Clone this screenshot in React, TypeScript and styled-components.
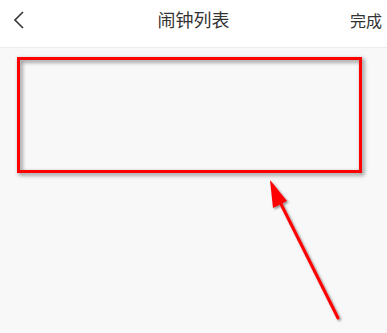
import styled, { createGlobalStyle } from "styled-components";

const GlobalStyle = createGlobalStyle`
  html, body {
    margin: 0;
    padding: 0;
    background: #f8f8f8;
  }
  body {
    font-family: "Noto Sans CJK SC", "Noto Sans", sans-serif;
  }
`;

const App = () => {
    return (
        <Page>
            <GlobalStyle />
            <Header>
                <BackButton>
                    <svg width="12" height="20" viewBox="0 0 12 20">
                        <path d="M10 2 L2 10 L10 18" fill="none" stroke="#333" strokeWidth="1.6" />
                    </svg>
                </BackButton>
                <Title>闹钟列表</Title>
                <DoneButton>完成</DoneButton>
            </Header>
            <Content>
                <Highlight />
            </Content>
            <Arrow width="387" height="333" viewBox="0 0 387 333">
                <defs>
                    <filter id="sh" x="-20%" y="-20%" width="140%" height="140%">
                        <feDropShadow dx="1.5" dy="1.5" stdDeviation="1.2" floodColor="#000" floodOpacity="0.45" />
                    </filter>
                </defs>
                <g filter="url(#sh)">
                    <line x1="338" y1="318" x2="278" y2="198" stroke="#f00" strokeWidth="3" strokeLinecap="round" />
                    <polygon points="270,180 287,201 273,208" fill="#f00" />
                </g>
            </Arrow>
        </Page>
    );
};

export default App;

const Page = styled.div`
  position: relative;
  width: 387px;
  height: 333px;
  background: #f8f8f8;
  overflow: hidden;
`;

const Header = styled.div`
  height: 47px;
  background: #fff;
  border-bottom: 1px solid #ececec;
  display: flex;
  align-items: center;
  justify-content: space-between;
  padding: 0 5px 0 13px;
  position: relative;
  box-sizing: content-box;
`;

const BackButton = styled.div`
  display: flex;
  align-items: center;
  width: 14px;
  height: 20px;
  margin-top: -7px;
`;

const Title = styled.div`
  position: absolute;
  left: 0;
  right: 0;
  top: 7px;
  text-align: center;
  font-size: 18px;
  color: #333;
  line-height: 24px;
  pointer-events: none;
`;

const DoneButton = styled.div`
  font-size: 16px;
  color: #333;
  line-height: 22px;
  margin-top: -7px;
`;

const Content = styled.div`
  padding: 9px 25px 0 17px;
`;

const Highlight = styled.div`
  height: 116px;
  border: 3px solid #f00;
  box-sizing: border-box;
  filter: drop-shadow(2px 2px 2px rgba(0, 0, 0, 0.5));
`;

const Arrow = styled.svg`
  position: absolute;
  left: 0;
  top: 0;
  pointer-events: none;
`;
